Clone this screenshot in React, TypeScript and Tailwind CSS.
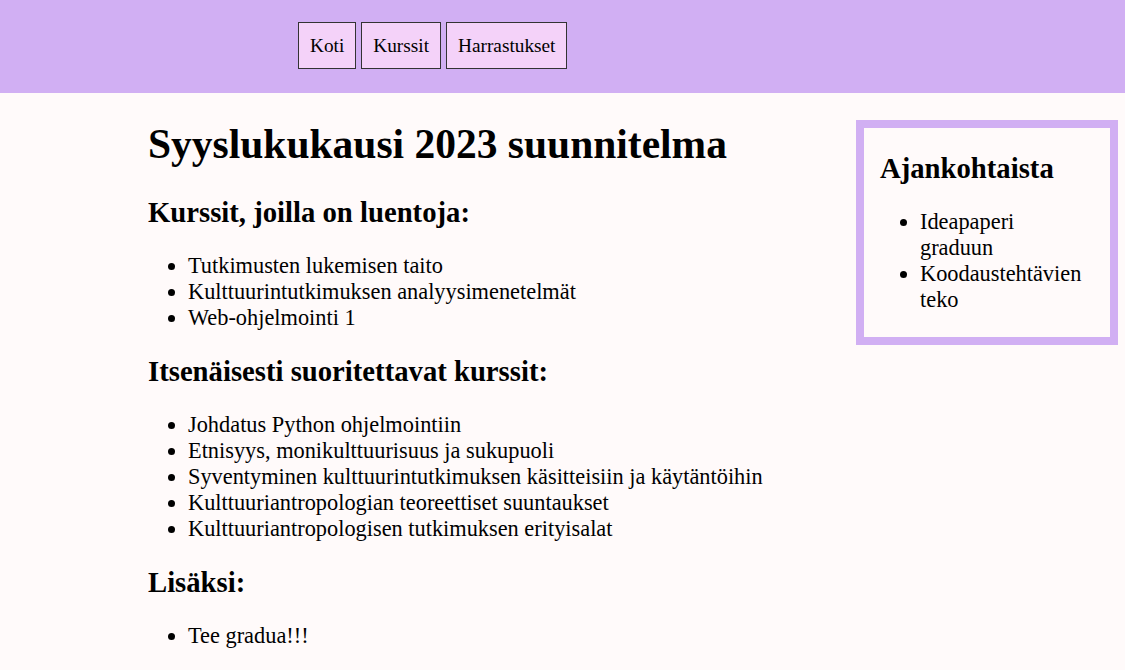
import React from "react";

const lectureCourses = [
  "Tutkimusten lukemisen taito",
  "Kulttuurintutkimuksen analyysimenetelmät",
  "Web-ohjelmointi 1",
];

const selfCourses = [
  "Johdatus Python ohjelmointiin",
  "Etnisyys, monikulttuurisuus ja sukupuoli",
  "Syventyminen kulttuurintutkimuksen käsitteisiin ja käytäntöihin",
  "Kulttuuriantropologian teoreettiset suuntaukset",
  "Kulttuuriantropologisen tutkimuksen erityisalat",
];

function H2({ children }: { children: React.ReactNode }) {
  return <h2 className="text-[28.7px] font-bold leading-[33px] my-[24px]">{children}</h2>;
}

function List({ items, className = "" }: { items: string[]; className?: string }) {
  return (
    <ul className={`list-disc pl-[40px] my-[24px] text-[22.35px] leading-[26px] ${className}`}>
      {items.map((i) => (
        <li key={i}>{i}</li>
      ))}
    </ul>
  );
}

export default function App() {
  return (
    <div
      className="min-h-[670px] bg-[#fffafa] text-black"
      style={{ fontFamily: '"Liberation Serif", "Times New Roman", serif' }}
    >
      <header className="h-[93px] bg-[#d1aff3] pt-[22px] pl-[298px]">
        <nav className="flex gap-[5px]">
          {["Koti", "Kurssit", "Harrastukset"].map((l) => (
            <a
              key={l}
              href="#"
              className="block border border-[#333333] bg-[#f4d2f9] px-[11px] py-[11px] text-[19.3px] leading-[23px]"
            >
              {l}
            </a>
          ))}
        </nav>
      </header>
      <div className="flex items-start justify-between">
        <main className="pl-[148px] pt-[28px]">
          <h1 className="text-[41.5px] font-bold leading-[47.7px] mb-[27px]">
            Syyslukukausi 2023 suunnitelma
          </h1>
          <H2>Kurssit, joilla on luentoja:</H2>
          <List items={lectureCourses} />
          <H2>Itsenäisesti suoritettavat kurssit:</H2>
          <List items={selfCourses} />
          <H2>Lisäksi:</H2>
          <List items={["Tee gradua!!!"]} />
        </main>
        <aside className="mt-[27px] mr-[7px] w-[262px] border-[8px] border-[#d1aff3] px-[16px]">
          <H2>Ajankohtaista</H2>
          <List items={["Ideapaperi graduun", "Koodaustehtävien teko"]} className="pr-[8px]" />
        </aside>
      </div>
    </div>
  );
}
